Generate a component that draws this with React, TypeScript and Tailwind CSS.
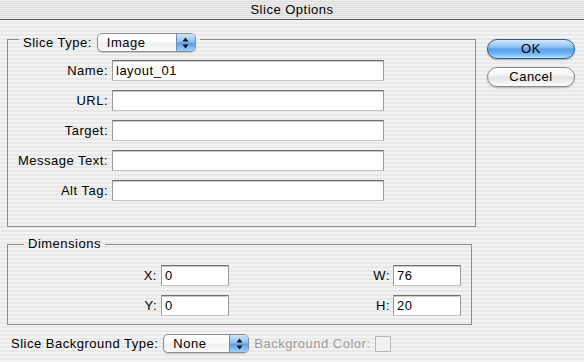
import React from "react";

const Arrows = () => (
  <svg width="7" height="12" viewBox="0 0 7 12">
    <path d="M3.5 0.5 L6.5 4.5 L0.5 4.5 Z" fill="#111" />
    <path d="M3.5 11.5 L6.5 7.5 L0.5 7.5 Z" fill="#111" />
  </svg>
);

function Popup({ label, width }: { label: string; width: string }) {
  return (
    <div
      className={`${width} flex h-[19px] items-stretch rounded-[5px] border border-[#8d8d8d] bg-[linear-gradient(to_bottom,#ffffff_0%,#fbfbfb_45%,#efefef_55%,#fafafa_100%)] shadow-[0_1px_1px_rgba(0,0,0,0.18)]`}
    >
      <div className="flex flex-1 items-center pl-[9px] text-black">{label}</div>
      <div className="flex w-[19px] items-center justify-center rounded-r-[4px] border-l border-[#6a8fbf] bg-[linear-gradient(to_bottom,#cfe5fb_0%,#8fc0f0_45%,#5e9ee6_55%,#9fd0fa_100%)]">
        <Arrows />
      </div>
    </div>
  );
}

function TextInput({ value, width }: { value?: string; width: string }) {
  return (
    <div
      className={`${width} flex h-[21px] items-center border border-[#9c9c9c] border-t-[#6f6f6f] border-b-[#c4c4c4] bg-white pl-[3px] shadow-[inset_0_1px_0_#c9c9c9] text-black`}
    >
      {value}
    </div>
  );
}

export default function App() {
  const rows = ["Name:", "URL:", "Target:", "Message Text:", "Alt Tag:"];
  return (
    <div className="h-[362px] w-[584px] overflow-hidden bg-[repeating-linear-gradient(to_bottom,#f3f3f3_0px,#f3f3f3_2px,#e8e8e8_2px,#e8e8e8_4px)] font-['Liberation_Sans',Arial,sans-serif] text-[13px] leading-[16px] tracking-[0.5px] text-black">
      {/* Title bar */}
      <div className="flex h-[20px] items-center justify-center border-b border-[#5e5e5e] bg-[repeating-linear-gradient(to_bottom,#ececec_0px,#ececec_1px,#dedede_1px,#dedede_2px)] text-[13px]">
        Slice Options
      </div>

      <div className="flex pl-[7px]">
        <div className="flex w-[469px] flex-col">
          {/* Slice Type group */}
          <fieldset className="mt-[7px] w-[469px] border border-[#8e8e8e] pb-[25px]">
            <legend className="ml-[11px] flex items-center gap-[5px] px-[4px] pt-[6px]">
              <span>Slice Type:</span>
              <Popup label="Image" width="w-[99px]" />
            </legend>
            <div className="flex flex-col gap-[9px] pt-[8px]">
              {rows.map((r, i) => (
                <div key={r} className="flex items-center">
                  <div className="w-[100px] text-right">{r}</div>
                  <div className="ml-[4px]">
                    <TextInput value={i === 0 ? "layout_01" : ""} width="w-[272px]" />
                  </div>
                </div>
              ))}
            </div>
          </fieldset>

          {/* Dimensions group */}
          <fieldset className="mt-[9px] w-[465px] border border-[#8e8e8e] pb-[8px]">
            <legend className="ml-[16px] px-[4px] leading-[16px]">Dimensions</legend>
            <div className="flex flex-col gap-[9px] pt-[13px]">
              {[
                ["X:", "0", "W:", "76"],
                ["Y:", "0", "H:", "20"],
              ].map((r) => (
                <div key={r[0]} className="flex items-center">
                  <div className="w-[149px] text-right">{r[0]}</div>
                  <div className="ml-[4px]">
                    <TextInput value={r[1]} width="w-[68px]" />
                  </div>
                  <div className="w-[161px] text-right">{r[2]}</div>
                  <div className="ml-[3px]">
                    <TextInput value={r[3]} width="w-[68px]" />
                  </div>
                </div>
              ))}
            </div>
          </fieldset>
        </div>

        {/* Buttons */}
        <div className="ml-[11px] flex flex-col gap-[8px] pt-[19px]">
          <div className="flex h-[20px] w-[88px] items-center justify-center rounded-full border border-[#2c5c94] bg-[linear-gradient(to_bottom,#d2e7fc_0%,#8cc1f1_40%,#5a9fe7_52%,#6fb2ef_75%,#b9e1fd_100%)] shadow-[0_1px_2px_rgba(0,0,0,0.3)]">
            OK
          </div>
          <div className="flex h-[20px] w-[88px] items-center justify-center rounded-full border border-[#8a8a8a] bg-[linear-gradient(to_bottom,#ffffff_0%,#f5f5f5_40%,#e4e4e4_52%,#efefef_75%,#ffffff_100%)] shadow-[0_1px_2px_rgba(0,0,0,0.25)]">
            Cancel
          </div>
        </div>
      </div>

      {/* Bottom row */}
      <div className="mt-[9px] flex items-center pl-[11px]">
        <span>Slice Background Type:</span>
        <div className="ml-[5px]">
          <Popup label="None" width="w-[86px]" />
        </div>
        <span className="ml-[5px] text-[#9c9c9c]">Background Color:</span>
        <div className="ml-[4px] h-[16px] w-[16px] border border-[#b8b8b8] bg-[#f1f1f1]" />
      </div>
    </div>
  );
}
